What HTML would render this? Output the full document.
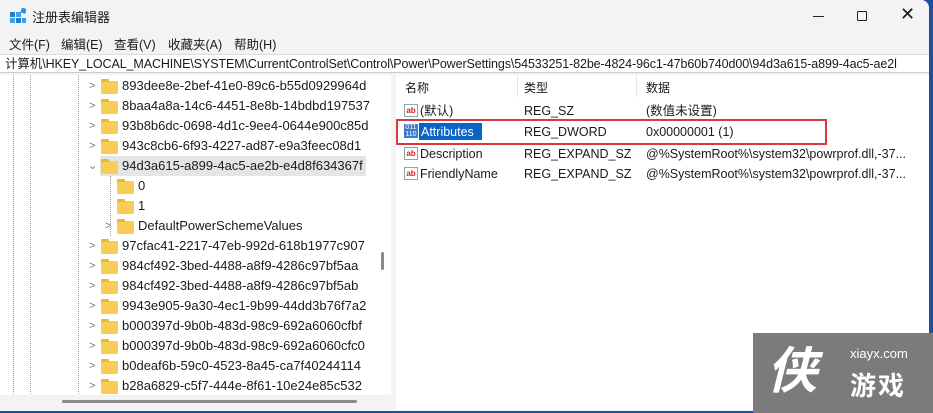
<!DOCTYPE html>
<html><head><meta charset="utf-8"><style>
*{margin:0;padding:0;box-sizing:border-box}
body{width:933px;height:413px;overflow:hidden;background:#1f4fa0;font-family:"Liberation Sans","Noto Sans CJK SC",sans-serif;font-size:12px;color:#1a1a1a;position:relative}
.win{position:absolute;left:0;top:0;width:929px;height:411px;background:#f3f3f3;border-radius:0 8px 0 0;overflow:hidden}
.title{position:absolute;left:0;top:0;width:100%;height:32px;background:#f3f3f3}
.title span{position:absolute;left:32px;top:7px;font-size:13px}
.menu{position:absolute;top:33px;left:0;height:19px;width:100%;background:#f3f3f3;font-size:12.5px}
.menu span{position:absolute;top:1px}
.addr{position:absolute;top:54px;left:0;width:100%;height:19px;background:#fff;border-top:1px solid #ddd;border-bottom:1px solid #ccc;font-size:12.5px;white-space:nowrap;overflow:hidden;padding:0 0 0 5px;line-height:18px;letter-spacing:-.1px}
.tree{position:absolute;left:0;top:75px;width:391px;height:335px;background:#fff;overflow:hidden}
.right{position:absolute;left:396px;top:75px;width:533px;height:335px;background:#fff}
.row{position:absolute;height:20px;font-size:13px;white-space:nowrap;line-height:20px}
.fold{position:absolute;width:17px;height:13px;background:#f7cd55;border-radius:1px;top:5px}
.fold:before{content:"";position:absolute;left:0;top:-2px;width:8px;height:3px;background:#e9b63a;border-radius:1px 1px 0 0}
.chev{position:absolute;color:#777;font-size:11px}
.dv{position:absolute;border-left:1px dotted #999;top:0}
.hd{position:absolute;top:5px;font-size:12px;line-height:16px}
.rr{position:absolute;font-size:12.5px;white-space:nowrap;line-height:16px}
.ab{position:absolute;left:8px;width:14px;height:13px;border:1px solid #8aa;background:#fff;font-size:8px;color:#c22;line-height:11px;text-align:center;font-weight:bold}
</style></head><body>
<div class="win">
<div class="title">
<svg style="position:absolute;left:10px;top:8px" width="16" height="16"><rect x="0" y="4" width="5" height="5" fill="#1d7fd0"/><rect x="6" y="4" width="5" height="5" fill="#3aa0e8"/><rect x="0" y="10" width="5" height="5" fill="#3aa0e8"/><rect x="6" y="10" width="5" height="5" fill="#1d7fd0"/><rect x="12" y="10" width="4" height="5" fill="#3aa0e8"/><rect x="11" y="0" width="5" height="5" fill="#2b8ee0" transform="rotate(20 13 3)"/></svg>
<span>注册表编辑器</span>
<div style="position:absolute;left:813px;top:16px;width:11px;height:1px;background:#222"></div>
<div style="position:absolute;left:857px;top:11px;width:10px;height:10px;border:1px solid #222;border-radius:1px"></div>
<div style="position:absolute;left:900px;top:4px;font-size:18px;font-weight:lighter">✕</div>
</div>
<div class="menu"><span style="left:9px">文件(F)</span><span style="left:61px">编辑(E)</span><span style="left:114px">查看(V)</span><span style="left:168px">收藏夹(A)</span><span style="left:234px">帮助(H)</span></div>
<div class="addr">计算机\HKEY_LOCAL_MACHINE\SYSTEM\CurrentControlSet\Control\Power\PowerSettings\54533251-82be-4824-96c1-47b60b740d00\94d3a615-a899-4ac5-ae2l</div>
<div class="tree">
<div class="dv" style="left:13px;height:335px"></div><div class="dv" style="left:30px;height:335px"></div><div class="dv" style="left:78px;height:335px"></div>
<div class="dv" style="left:110px;top:101px;height:60px"></div>
<div style="position:absolute;left:100px;top:81px;width:266px;height:20px;background:#e5e5e5"></div>
<div class="row" style="top:1px;left:0;width:380px"><span class="chev" style="left:89px">&gt;</span><div class="fold" style="left:101px"></div><span style="position:absolute;left:122px">893dee8e-2bef-41e0-89c6-b55d0929964d</span></div>
<div class="row" style="top:21px;left:0;width:380px"><span class="chev" style="left:89px">&gt;</span><div class="fold" style="left:101px"></div><span style="position:absolute;left:122px">8baa4a8a-14c6-4451-8e8b-14bdbd197537</span></div>
<div class="row" style="top:41px;left:0;width:380px"><span class="chev" style="left:89px">&gt;</span><div class="fold" style="left:101px"></div><span style="position:absolute;left:122px">93b8b6dc-0698-4d1c-9ee4-0644e900c85d</span></div>
<div class="row" style="top:61px;left:0;width:380px"><span class="chev" style="left:89px">&gt;</span><div class="fold" style="left:101px"></div><span style="position:absolute;left:122px">943c8cb6-6f93-4227-ad87-e9a3feec08d1</span></div>
<div class="row" style="top:81px;left:0;width:380px"><span class="chev" style="left:88px">⌄</span><div class="fold" style="left:101px"></div><span style="position:absolute;left:122px">94d3a615-a899-4ac5-ae2b-e4d8f634367f</span></div>
<div class="row" style="top:101px;left:0;width:380px"><div class="fold" style="left:117px"></div><span style="position:absolute;left:138px">0</span></div>
<div class="row" style="top:121px;left:0;width:380px"><div class="fold" style="left:117px"></div><span style="position:absolute;left:138px">1</span></div>
<div class="row" style="top:141px;left:0;width:380px"><span class="chev" style="left:105px">&gt;</span><div class="fold" style="left:117px"></div><span style="position:absolute;left:138px">DefaultPowerSchemeValues</span></div>
<div class="row" style="top:161px;left:0;width:380px"><span class="chev" style="left:89px">&gt;</span><div class="fold" style="left:101px"></div><span style="position:absolute;left:122px">97cfac41-2217-47eb-992d-618b1977c907</span></div>
<div class="row" style="top:181px;left:0;width:380px"><span class="chev" style="left:89px">&gt;</span><div class="fold" style="left:101px"></div><span style="position:absolute;left:122px">984cf492-3bed-4488-a8f9-4286c97bf5aa</span></div>
<div class="row" style="top:201px;left:0;width:380px"><span class="chev" style="left:89px">&gt;</span><div class="fold" style="left:101px"></div><span style="position:absolute;left:122px">984cf492-3bed-4488-a8f9-4286c97bf5ab</span></div>
<div class="row" style="top:221px;left:0;width:380px"><span class="chev" style="left:89px">&gt;</span><div class="fold" style="left:101px"></div><span style="position:absolute;left:122px">9943e905-9a30-4ec1-9b99-44dd3b76f7a2</span></div>
<div class="row" style="top:241px;left:0;width:380px"><span class="chev" style="left:89px">&gt;</span><div class="fold" style="left:101px"></div><span style="position:absolute;left:122px">b000397d-9b0b-483d-98c9-692a6060cfbf</span></div>
<div class="row" style="top:261px;left:0;width:380px"><span class="chev" style="left:89px">&gt;</span><div class="fold" style="left:101px"></div><span style="position:absolute;left:122px">b000397d-9b0b-483d-98c9-692a6060cfc0</span></div>
<div class="row" style="top:281px;left:0;width:380px"><span class="chev" style="left:89px">&gt;</span><div class="fold" style="left:101px"></div><span style="position:absolute;left:122px">b0deaf6b-59c0-4523-8a45-ca7f40244114</span></div>
<div class="row" style="top:301px;left:0;width:380px"><span class="chev" style="left:89px">&gt;</span><div class="fold" style="left:101px"></div><span style="position:absolute;left:122px">b28a6829-c5f7-444e-8f61-10e24e85c532</span></div>
<div style="position:absolute;left:0;top:320px;width:391px;height:15px;background:#f3f3f3"></div>
<div style="position:absolute;left:62px;top:325px;width:295px;height:3px;background:#8a8a8a;border-radius:2px"></div>
<div style="position:absolute;left:381px;top:177px;width:3px;height:18px;background:#8a8a8a;border-radius:2px"></div>
</div>
<div class="right">
<div class="hd" style="left:9px">名称</div><div class="hd" style="left:128px">类型</div><div class="hd" style="left:250px">数据</div>
<div style="position:absolute;left:121px;top:0;height:22px;border-left:1px solid #e5e5e5"></div>
<div style="position:absolute;left:240px;top:0;height:22px;border-left:1px solid #e5e5e5"></div>
<div class="ab" style="top:29px">ab</div><div class="rr" style="left:24px;top:28px">(默认)</div><div class="rr" style="left:128px;top:28px">REG_SZ</div><div class="rr" style="left:250px;top:28px">(数值未设置)</div>
<div style="position:absolute;left:8px;top:49px;width:14px;height:14px;background:#3d7bc8;color:#fff;font-size:7px;line-height:7px;text-align:center">011<br>110</div>
<div style="position:absolute;left:23px;top:48px;width:63px;height:17px;background:#0a64c8"></div>
<div class="rr" style="left:25px;top:49px;color:#fff">Attributes</div><div class="rr" style="left:128px;top:49px">REG_DWORD</div><div class="rr" style="left:250px;top:49px">0x00000001 (1)</div>
<div style="position:absolute;left:0;top:44px;width:431px;height:26px;border:2px solid #d9393b"></div>
<div class="ab" style="top:72px">ab</div><div class="rr" style="left:24px;top:71px">Description</div><div class="rr" style="left:128px;top:71px">REG_EXPAND_SZ</div><div class="rr" style="left:250px;top:71px">@%SystemRoot%\system32\powrprof.dll,-37...</div>
<div class="ab" style="top:92px">ab</div><div class="rr" style="left:24px;top:91px">FriendlyName</div><div class="rr" style="left:128px;top:91px">REG_EXPAND_SZ</div><div class="rr" style="left:250px;top:91px">@%SystemRoot%\system32\powrprof.dll,-37...</div>
</div>
</div>
<div style="position:absolute;left:753px;top:333px;width:180px;height:80px;background:#7b7b7b;color:#fff">
<div style="position:absolute;left:14px;top:8px;font-size:50px;font-weight:bold;line-height:60px;font-style:italic">侠</div>
<div style="position:absolute;left:97px;top:13px;font-size:13px">xiayx.com</div>
<div style="position:absolute;left:97px;top:33px;font-size:26px;font-weight:bold;letter-spacing:2px">游戏</div>
</div>
</body></html>
